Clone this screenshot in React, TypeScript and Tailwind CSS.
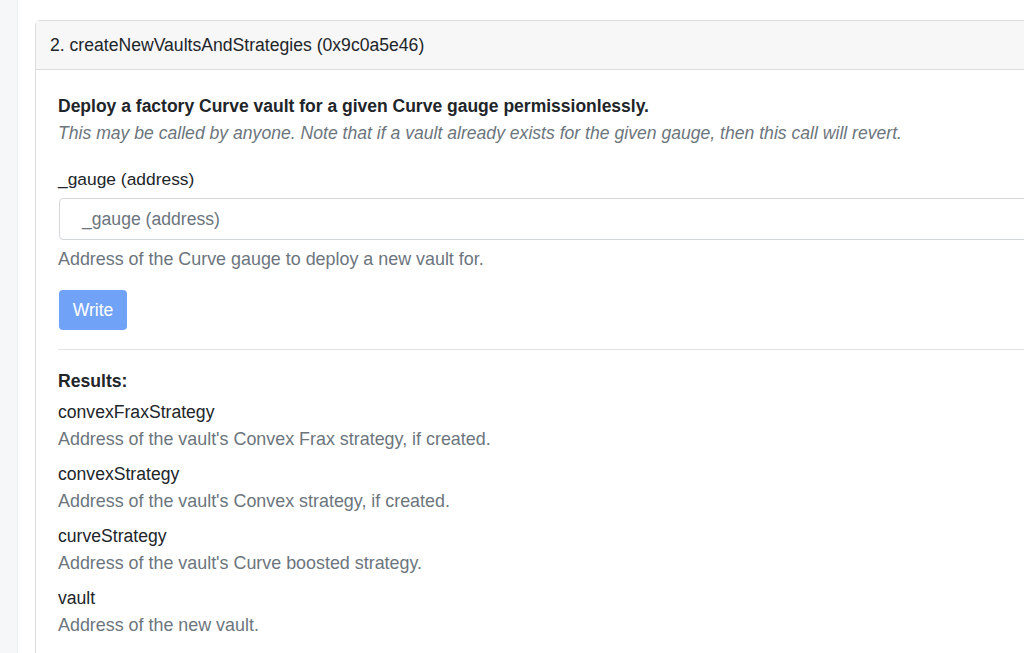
import React from "react";

const results = [
  { name: "convexFraxStrategy", desc: "Address of the vault's Convex Frax strategy, if created." },
  { name: "convexStrategy", desc: "Address of the vault's Convex strategy, if created." },
  { name: "curveStrategy", desc: "Address of the vault's Curve boosted strategy." },
  { name: "vault", desc: "Address of the new vault." },
];

export default function App() {
  return (
    <div
      className="flex h-[653px] w-[1024px] overflow-hidden bg-white text-[#212529]"
      style={{ fontFamily: '"Liberation Sans", Arial, sans-serif' }}
    >
      <div className="w-[18px] shrink-0 bg-[#f6f7f9] border-r border-[#eef0f2]" />
      <div className="flex-1 pl-[17px] pt-[20px] min-w-0">
        <div className="w-[1100px] rounded-tl-[5px] border border-[#dcdcdc]">
          <div className="h-[49px] flex items-center pl-[14px] bg-[#f7f7f8] border-b border-[#dcdcdc] text-[17.6px] text-[#212529]">
            2. createNewVaultsAndStrategies (0x9c0a5e46)
          </div>
          <div className="pl-[22px] pt-[24px] pb-[20px]">
            <div className="text-[17.5px] leading-[24px] font-bold text-[#212529]">
              Deploy a factory Curve vault for a given Curve gauge permissionlessly.
            </div>
            <div className="text-[17.6px] leading-[22px] italic text-[#6c757d] mt-[4px]">
              This may be called by anyone. Note that if a vault already exists for the given gauge, then this call will revert.
            </div>

            <div className="mt-[23px] text-[17.4px] leading-[24px]">_gauge (address)</div>
            <div className="mt-[7px] ml-px h-[42px] w-[1000px] rounded-[4px] border border-[#d4d8dc] flex items-center pl-[22px] text-[17.6px] text-[#6c757d]">
              _gauge (address)
            </div>
            <div className="mt-[7px] text-[17.9px] leading-[24px] text-[#6c757d]">
              Address of the Curve gauge to deploy a new vault for.
            </div>

            <button className="mt-[19px] ml-px h-[40px] w-[68px] rounded-[4px] bg-[#70a2f8] text-white text-[17.6px] flex items-center justify-center">
              Write
            </button>

            <div className="mt-[19px] h-px bg-[#e3e3e3]" />

            <div className="mt-[19px] text-[17.6px] leading-[24px] font-bold">Results:</div>
            <div className="mt-[7px] flex flex-col gap-[11px]">
              {results.map((r) => (
                <div key={r.name}>
                  <div className="text-[17.6px] leading-[24px] text-[#212529]">{r.name}</div>
                  <div className="mt-[3px] text-[17.9px] leading-[24px] text-[#6c757d]">{r.desc}</div>
                </div>
              ))}
            </div>
          </div>
        </div>
      </div>
    </div>
  );
}
